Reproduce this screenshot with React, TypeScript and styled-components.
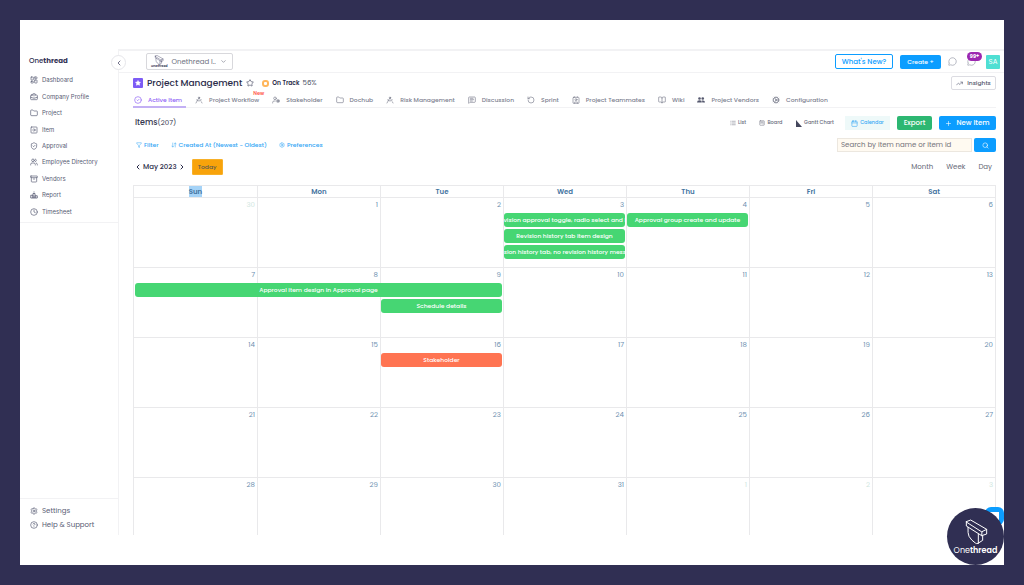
import React from 'react';
import styled, { createGlobalStyle, css } from 'styled-components';
import {
  Archive, ArrowDownUp, BookOpen, BriefcaseBusiness, Calendar, ChevronDown, ChevronLeft, ChevronRight,
  CircleCheck, CircleHelp, Clock, Cog, Contact, DraftingCompass, Folder, Funnel, LayoutDashboard, List,
  MessageCircle, MessageSquareText, Plus, RotateCcw, Search, Settings, ShieldCheck, SquareArrowRight,
  SquareKanban, Star, TrendingUp, UserCog, Users,
} from 'lucide-react';

const navy = '#302f53';
const blue = '#0c9dff';
const line = '#f2f2f4';
const grid = '#e9e9eb';

const GlobalStyle = createGlobalStyle`
  * { box-sizing: border-box; }
  body {
    margin: 0;
    background: ${navy};
    color: #4b4f66;
    font-family: Poppins, Inter, "Liberation Sans", sans-serif;
    font-size: 7px;
    line-height: 10px;
  }
  button, input, select { font: inherit; color: inherit; margin: 0; }
  button { cursor: pointer; }
  a { color: inherit; text-decoration: none; }
  h1, h2 { margin: 0; font-weight: 500; }
  svg { display: block; flex: none; }
`;

const Frame = styled.div`
  position: relative;
  margin: 20px;
  min-height: calc(100vh - 40px);
  padding: 29px 0 30px;
  background: #fff;
  display: flex;
`;

const Sidebar = styled.aside`
  position: relative;
  flex: 0 0 99px;
  display: flex;
  flex-direction: column;
  border-right: 1px solid ${line};
`;

const Brand = styled.a<{ $light?: boolean }>`
  font-size: ${p => (p.$light ? 8 : 7)}px;
  line-height: 12px;
  font-weight: ${p => (p.$light ? 400 : 500)};
  color: ${p => (p.$light ? '#fff' : navy)};
  b { font-weight: ${p => (p.$light ? 600 : 700)}; }
`;

const SideBrand = styled.div`
  padding: 6px 9px 5px;
`;

const SideNav = styled.nav`
  display: grid;
  grid-auto-rows: 1fr;
  height: 151px;
  padding-bottom: 2px;
  border-bottom: 1px solid ${line};
`;

const SideLink = styled.a<{ $large?: boolean }>`
  display: flex;
  align-items: center;
  gap: 4px;
  padding-left: 10px;
  color: #585c74;
  font-size: 7px;
  white-space: nowrap;
  ${p => !p.$large && css`font-family: Inter, "Liberation Sans", sans-serif; font-size: 6px;`}
`;

const SideFooter = styled.div`
  margin-top: auto;
  height: 37px;
  padding-top: 5px;
  display: grid;
  grid-auto-rows: 14px;
  border-top: 1px solid ${line};
`;

const Collapse = styled.button`
  position: absolute;
  top: 6px;
  right: -8px;
  width: 15px;
  height: 15px;
  padding: 0;
  display: grid;
  place-items: center;
  border: 1px solid #e6e6ea;
  border-radius: 50%;
  background: #fff;
  color: ${navy};
`;

const Main = styled.main`
  flex: 1;
  min-width: 0;
  display: flex;
  flex-direction: column;
  border-top: 2px solid ${line};
`;

const Bar = styled.div<{ $height: number; $top?: boolean }>`
  display: flex;
  align-items: center;
  justify-content: space-between;
  height: ${p => p.$height}px;
  padding: 0 8px 0 14px;
  ${p => p.$top && css`padding-right: 4px; border-bottom: 1px solid ${line};`}
`;

const Group = styled.div<{ $gap: number }>`
  display: flex;
  align-items: center;
  gap: ${p => p.$gap}px;
`;

const Workspace = styled.label`
  display: flex;
  align-items: center;
  gap: 4px;
  width: 87px;
  height: 17px;
  margin-left: 13px;
  padding: 0 5px 0 4px;
  border: 1px solid #d8d8dc;
  border-radius: 2px;
  color: #6d7080;
`;

const WorkspaceLogo = styled.span`
  display: flex;
  flex-direction: column;
  align-items: center;
  color: ${navy};
  font-size: 3px;
  line-height: 3px;
  font-weight: 600;
`;

const WorkspaceSelect = styled.select`
  appearance: none;
  flex: 1;
  min-width: 0;
  padding: 0;
  border: 0;
  background: transparent;
`;

const Button = styled.button<{ $tone?: 'solid' | 'outline' | 'plain' | 'green'; $width: number; $height?: number; $small?: boolean }>`
  display: flex;
  align-items: center;
  justify-content: center;
  gap: 4px;
  width: ${p => p.$width}px;
  height: ${p => p.$height ?? 14}px;
  padding: 0;
  border: 1px solid transparent;
  border-radius: 2px;
  font-size: ${p => (p.$small ? 6 : 7)}px;
  font-weight: 500;
  white-space: nowrap;
  ${p => p.$tone === 'outline' && css`background: #fff; border-color: ${blue}; color: ${blue};`}
  ${p => p.$tone === 'plain' && css`background: #fff; border-color: #dcdce2; color: #55586e;`}
  ${p => p.$tone === 'green' && css`background: #2db772; color: #fff;`}
  ${p => (!p.$tone || p.$tone === 'solid') && css`background: ${blue}; color: #fff;`}
`;

const IconButton = styled.button`
  position: relative;
  display: grid;
  place-items: center;
  padding: 0;
  border: 0;
  background: none;
  color: #a0a3b0;
`;

const Count = styled.span`
  position: absolute;
  top: -5px;
  left: 0;
  width: 15px;
  height: 9px;
  border-radius: 5px;
  background: #9c27b0;
  color: #fff;
  font-size: 5px;
  font-weight: 700;
  line-height: 9px;
  text-align: center;
`;

const Avatar = styled.span`
  width: 14px;
  height: 14px;
  border-radius: 1px;
  background: #4fdfd3;
  color: #fff;
  line-height: 14px;
  text-align: center;
`;

const ProjectMark = styled.span`
  display: grid;
  place-items: center;
  width: 10px;
  height: 10px;
  border-radius: 1px;
  background: #7d5cf5;
  color: #fff;
`;

const ProjectTitle = styled.h1`
  color: #2b2c4a;
  font-size: 9px;
  line-height: 14px;
`;

const Status = styled.span`
  display: flex;
  align-items: center;
  gap: 3px;
  margin-left: 4px;
  b { font-size: 6px; font-weight: 600; color: #2b2c4a; }
`;

const StatusRing = styled.span`
  width: 7px;
  height: 7px;
  border: 2px solid #ffb65c;
  border-radius: 3px;
`;

const Tabs = styled.nav`
  display: flex;
  gap: 13px;
  height: 15px;
  margin: 0 8px 0 14px;
  border-bottom: 1px solid ${line};
`;

const Tab = styled.a<{ $active?: boolean }>`
  position: relative;
  display: flex;
  align-items: center;
  gap: 6px;
  height: 15px;
  padding-bottom: 1px;
  font-size: 6px;
  font-weight: 500;
  white-space: nowrap;
  color: ${p => (p.$active ? '#8f63f5' : '#7d8190')};
  ${p => p.$active && css`padding: 0 4px 0 1px; margin-right: -4px; border-bottom: 2px solid #c3b0f4;`}
`;

const NewTag = styled.sup`
  position: absolute;
  top: -2px;
  right: -5px;
  color: #ff5c4d;
  font-size: 5px;
  font-weight: 600;
  line-height: 6px;
`;

const Heading = styled.h2`
  padding-left: 2px;
  font-size: 8px;
  color: #34364e;
  span { font-size: 7px; font-weight: 400; }
`;

const ViewButton = styled.button<{ $active?: boolean; $width: number }>`
  display: flex;
  align-items: center;
  justify-content: center;
  gap: 2px;
  width: ${p => p.$width}px;
  height: 14px;
  padding: 0;
  border: 0;
  font-size: 5px;
  font-weight: 500;
  white-space: nowrap;
  color: ${p => (p.$active ? '#3aa9f5' : '#6a6d7c')};
  background: ${p => (p.$active ? '#eef9f9' : 'transparent')};
`;

const LinkButton = styled.button`
  display: flex;
  align-items: center;
  gap: 2px;
  padding: 0 3px;
  border: 0;
  background: none;
  color: #36a7f5;
  font-size: 6px;
  font-weight: 500;
`;

const SearchBox = styled.form`
  display: flex;
  gap: 2px;
`;

const SearchInput = styled.input`
  width: 135px;
  height: 14px;
  padding: 0 3px;
  border: 1px solid #ece7df;
  background: #fffaf1;
  &::placeholder { color: #73727a; opacity: 1; }
`;

const Pager = styled.div`
  display: flex;
  align-items: center;
  gap: 1px;
  padding-left: 1px;
  color: #2b2c4a;
  font-weight: 500;
`;

const PagerButton = styled.button`
  padding: 0;
  border: 0;
  background: none;
`;

const Today = styled.button`
  width: 31px;
  height: 16px;
  margin-left: 5px;
  padding: 0;
  border: 1px solid #f7b029;
  border-radius: 1px;
  background: #f8a30b;
  color: #5a5a52;
  font-size: 6px;
`;

const RangeButton = styled.button`
  padding: 0 4px;
  border: 0;
  background: none;
  color: #666977;
`;

const CalendarGrid = styled.section`
  flex: 1;
  margin: 3px 8px 0 14px;
  border: 1px solid ${grid};
  border-bottom: 0;
`;

const WeekdayRow = styled.div`
  display: grid;
  grid-template-columns: repeat(7, 1fr);
`;

const Weekday = styled.div<{ $selected?: boolean }>`
  height: 11px;
  line-height: 11px;
  text-align: center;
  font-weight: 600;
  color: #44749f;
  & + & { border-left: 1px solid ${grid}; }
  span { ${p => p.$selected && css`background: #a5d3f7;`} display: inline-block; }
`;

const WeekRow = styled.div<{ $short?: boolean }>`
  display: grid;
  grid-template-columns: repeat(7, 1fr);
  grid-template-rows: 13px 14px 14px 14px;
  row-gap: 2px;
  height: ${p => (p.$short ? 58 : 70)}px;
  overflow: hidden;
  border-top: 1px solid ${grid};
`;

const Day = styled.div<{ $col: number; $muted?: boolean }>`
  grid-column: ${p => p.$col};
  grid-row: 1 / -1;
  height: 70px;
  padding: 2px 2px 0 0;
  text-align: right;
  color: ${p => (p.$muted ? '#cfe6e0' : '#6d90b0')};
  border-left: ${p => (p.$col > 1 ? `1px solid ${grid}` : '0')};
`;

const Event = styled.a<{ $from: number; $to: number; $lane: number; $color?: string }>`
  grid-column: ${p => p.$from} / ${p => p.$to};
  grid-row: ${p => p.$lane + 1};
  display: flex;
  justify-content: center;
  margin: 0 1px;
  overflow: hidden;
  border-radius: 3px;
  background: ${p => p.$color ?? '#46d673'};
  color: #fff;
  font-size: 6px;
  font-weight: 500;
  line-height: 14px;
  white-space: nowrap;
`;

const ChatLauncher = styled.button`
  position: absolute;
  right: 0;
  bottom: 40px;
  width: 19px;
  height: 18px;
  padding: 0;
  border: 0;
  border-radius: 6px;
  background: ${blue};
  &::after {
    content: '';
    position: absolute;
    left: 4px;
    top: 5px;
    width: 10px;
    height: 9px;
    background: #fff;
  }
`;

const Seal = styled.div`
  position: absolute;
  right: 0;
  bottom: 0;
  width: 57px;
  height: 57px;
  padding-top: 11px;
  display: flex;
  flex-direction: column;
  align-items: center;
  border-radius: 50%;
  background: ${navy};
  color: #fff;
`;

function ThreadMark({ size }: { size: number }) {
  return (
    <svg width={size} height={size} viewBox="0 0 76 78" fill="none" stroke="currentColor" strokeWidth="3" strokeLinejoin="round" strokeLinecap="round" aria-hidden="true">
      <path d="M9 8 22 3 70 31 56 38Z" />
      <path d="M9 8v13l46 29 1-12" />
      <path d="M70 31v14l-15 5" />
      <path d="M14 25q-1 18 3 27 7 12 19 20 4 3 8 1l14-9V50M45 45v28" />
    </svg>
  );
}

function GanttIcon() {
  return (
    <svg width="6" height="7" viewBox="0 0 12 14" aria-hidden="true">
      <path d="M0 0 12 14H0Z" fill="#44465c" />
    </svg>
  );
}

function PeopleIcon() {
  return (
    <svg width="8" height="8" viewBox="0 0 16 16" fill="#55586e" aria-hidden="true">
      <circle cx="5" cy="5" r="2.6" />
      <circle cx="11.5" cy="5" r="2.6" />
      <path d="M0 13q0-4.500 5-4.500T9.500 13ZM10.500 13q0-2.500-1-3.800 6.500-1.700 6.500 3.800Z" />
    </svg>
  );
}

function PodiumIcon() {
  return (
    <svg width="8" height="8" viewBox="0 0 16 16" fill="none" stroke="currentColor" strokeWidth="1.600" strokeLinejoin="round" aria-hidden="true">
      <path d="M1.500 8.500H6V14H1.500ZM6 5h4v9H6ZM10 9.500h4.500V14H10ZM8 1v2" />
    </svg>
  );
}

const icon = { size: 8, strokeWidth: 2 };

const sideLinks: [string, React.ElementType][] = [
  ['Dashboard', LayoutDashboard],
  ['Company Profile', BriefcaseBusiness],
  ['Project', Folder],
  ['Item', SquareArrowRight],
  ['Approval', ShieldCheck],
  ['Employee Directory', Users],
  ['Vendors', Archive],
  ['Report', PodiumIcon],
  ['Timesheet', Clock],
];

const tabs: [string, React.ElementType][] = [
  ['Active Item', CircleCheck],
  ['Project Workflow', DraftingCompass],
  ['Stakeholder', UserCog],
  ['Dochub', Folder],
  ['Risk Management', DraftingCompass],
  ['Discussion', MessageSquareText],
  ['Sprint', RotateCcw],
  ['Project Teammates', Contact],
  ['Wiki', BookOpen],
  ['Project Vendors', PeopleIcon],
  ['Configuration', Cog],
];

const weekdays = ['Sun', 'Mon', 'Tue', 'Wed', 'Thu', 'Fri', 'Sat'];

interface CalendarEvent { title: string; from: number; to: number; lane: number; color?: string }

const weeks: { days: number[]; events: CalendarEvent[] }[] = [
  {
    days: [30, 1, 2, 3, 4, 5, 6],
    events: [
      { title: 'Revision approval toggle, radio select and list', from: 4, to: 5, lane: 1 },
      { title: 'Approval group create and update', from: 5, to: 6, lane: 1 },
      { title: 'Revision history tab item design', from: 4, to: 5, lane: 2 },
      { title: 'Revision history tab, no revision history message', from: 4, to: 5, lane: 3 },
    ],
  },
  {
    days: [7, 8, 9, 10, 11, 12, 13],
    events: [
      { title: 'Approval item design in Approval page', from: 1, to: 4, lane: 1 },
      { title: 'Schedule details', from: 3, to: 4, lane: 2 },
    ],
  },
  { days: [14, 15, 16, 17, 18, 19, 20], events: [{ title: 'Stakeholder', from: 3, to: 4, lane: 1, color: '#ff7452' }] },
  { days: [21, 22, 23, 24, 25, 26, 27], events: [] },
  { days: [28, 29, 30, 31, 1, 2, 3], events: [] },
];

const isOutside = (week: number, day: number) => (week === 0 && day > 20) || (week === 4 && day < 10);

export default function App() {
  return (
    <>
      <GlobalStyle />
      <Frame>
        <Sidebar>
          <SideBrand><Brand href="#">One<b>thread</b></Brand></SideBrand>
          <Collapse aria-label="Collapse sidebar"><ChevronLeft size={8} /></Collapse>
          <SideNav>
            {sideLinks.map(([label, Icon]) => (
              <SideLink key={label} href="#"><Icon {...icon} />{label}</SideLink>
            ))}
          </SideNav>
          <SideFooter>
            <SideLink $large href="#"><Settings {...icon} />Settings</SideLink>
            <SideLink $large href="#"><CircleHelp {...icon} />Help &amp; Support</SideLink>
          </SideFooter>
        </Sidebar>

        <Main>
          <Bar $height={22} $top>
            <Workspace>
              <WorkspaceLogo><ThreadMark size={10} />Onethread</WorkspaceLogo>
              <WorkspaceSelect aria-label="Workspace"><option>Onethread I..</option></WorkspaceSelect>
              <ChevronDown size={7} />
            </Workspace>
            <Group $gap={7}>
              <Button $tone="outline" $width={58} $height={15}>What's New?</Button>
              <Button $small $width={41}>Create +</Button>
              <Group $gap={10}>
                <IconButton aria-label="Messages"><MessageCircle size={9} /></IconButton>
                <IconButton aria-label="Notifications"><MessageCircle size={9} /><Count>99+</Count></IconButton>
                <Avatar>SA</Avatar>
              </Group>
            </Group>
          </Bar>

          <Bar $height={20}>
            <Group $gap={4}>
              <ProjectMark><Star size={6} fill="currentColor" /></ProjectMark>
              <ProjectTitle>Project Management</ProjectTitle>
              <Star size={8} />
              <Status><StatusRing /><b>On Track</b> 56%</Status>
            </Group>
            <Button $tone="plain" $small $width={45}><TrendingUp size={7} />Insights</Button>
          </Bar>

          <Tabs>
            {tabs.map(([label, Icon], i) => (
              <Tab key={label} href="#" $active={i === 0}>
                <Icon size={8} strokeWidth={2} />{label}
                {i === 1 && <NewTag>New</NewTag>}
              </Tab>
            ))}
          </Tabs>

          <Bar $height={30}>
            <Heading>Items<span>(207)</span></Heading>
            <Group $gap={7}>
              <Group $gap={8}>
                <ViewButton $width={22}><List size={6} />List</ViewButton>
                <ViewButton $width={28}><SquareKanban size={6} />Board</ViewButton>
                <ViewButton $width={44}><GanttIcon />Gantt Chart</ViewButton>
                <ViewButton $width={45} $active><Calendar size={7} />Calendar</ViewButton>
              </Group>
              <Button $tone="green" $width={35}>Export</Button>
              <Button $width={57}><Plus size={7} />New Item</Button>
            </Group>
          </Bar>

          <Bar $height={14}>
            <Group $gap={6}>
              <LinkButton><Funnel size={6} />Filter</LinkButton>
              <LinkButton><ArrowDownUp size={6} />Created At (Newest - Oldest)</LinkButton>
              <LinkButton><Settings size={6} />Preferences</LinkButton>
            </Group>
            <SearchBox onSubmit={e => e.preventDefault()}>
              <SearchInput aria-label="Search items" placeholder="Search by item name or item id" />
              <Button type="submit" $width={22} aria-label="Search"><Search size={7} /></Button>
            </SearchBox>
          </Bar>

          <Bar $height={30}>
            <Pager>
              <PagerButton aria-label="Previous month"><ChevronLeft size={8} strokeWidth={3} /></PagerButton>
              May 2023
              <PagerButton aria-label="Next month"><ChevronRight size={8} strokeWidth={3} /></PagerButton>
              <Today>Today</Today>
            </Pager>
            <Group $gap={5}>
              <RangeButton>Month</RangeButton>
              <RangeButton>Week</RangeButton>
              <RangeButton>Day</RangeButton>
            </Group>
          </Bar>

          <CalendarGrid aria-label="May 2023">
            <WeekdayRow>
              {weekdays.map((d, i) => <Weekday key={d} $selected={i === 0}><span>{d}</span></Weekday>)}
            </WeekdayRow>
            {weeks.map((week, w) => (
              <WeekRow key={w} $short={w === 4}>
                {week.days.map((d, i) => <Day key={i} $col={i + 1} $muted={isOutside(w, d)}>{d}</Day>)}
                {week.events.map(e => (
                  <Event key={e.title} href="#" $from={e.from} $to={e.to} $lane={e.lane} $color={e.color}>{e.title}</Event>
                ))}
              </WeekRow>
            ))}
          </CalendarGrid>
        </Main>

        <ChatLauncher aria-label="Open chat" />
        <Seal>
          <ThreadMark size={26} />
          <Brand as="span" $light>One<b>thread</b></Brand>
        </Seal>
      </Frame>
    </>
  );
}
